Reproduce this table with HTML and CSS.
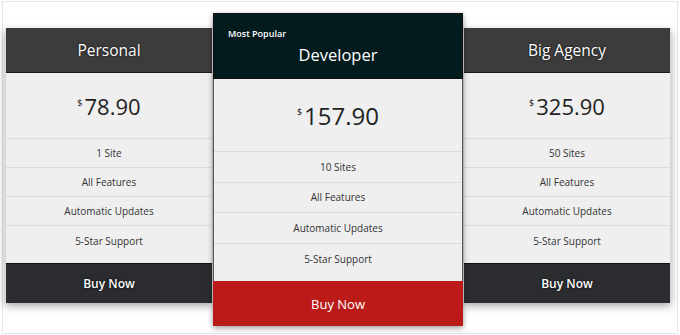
FILE: index.html
```html
<!DOCTYPE html>
<html>
<head>
<meta charset="utf-8">
<link rel="stylesheet" href="styles.css">
</head>
<body>
<div class="frame">
  <div class="plans">
    <div class="plan side">
      <div class="head"><span class="title">Personal</span></div>
      <div class="price"><span class="cur">$</span>78.90</div>
      <ul class="features">
        <li>1 Site</li>
        <li>All Features</li>
        <li>Automatic Updates</li>
        <li>5-Star Support</li>
      </ul>
      <div class="buy">Buy Now</div>
    </div>
    <div class="plan featured">
      <div class="head"><span class="badge">Most Popular</span><span class="title">Developer</span></div>
      <div class="price"><span class="cur">$</span>157.90</div>
      <ul class="features">
        <li>10 Sites</li>
        <li>All Features</li>
        <li>Automatic Updates</li>
        <li>5-Star Support</li>
      </ul>
      <div class="buy">Buy Now</div>
    </div>
    <div class="plan side">
      <div class="head"><span class="title">Big Agency</span></div>
      <div class="price"><span class="cur">$</span>325.90</div>
      <ul class="features">
        <li>50 Sites</li>
        <li>All Features</li>
        <li>Automatic Updates</li>
        <li>5-Star Support</li>
      </ul>
      <div class="buy">Buy Now</div>
    </div>
  </div>
</div>
</body>
</html>
```
FILE: styles.css
```css
* { box-sizing: border-box; }
html, body { margin: 0; padding: 0; background: #fff; }
body {
  font-family: "Open Sans", "Liberation Sans", sans-serif;
  color: #333;
  width: 680px;
  height: 335px;
  overflow: hidden;
}
.frame {
  margin: 1px 0 0 2px;
  width: 676px;
  height: 333px;
  border: 1px solid #e6e6e6;
  padding: 11px 0 0 2px;
}
.plans {
  display: flex;
  align-items: flex-start;
}
.plan {
  display: flex;
  flex-direction: column;
  background: #efefef;
}
.side {
  width: 208px;
  margin-top: 15px;
  box-shadow: 0 3px 8px rgba(0,0,0,0.35);
  border-left: 1px solid #d8d8d8;
  border-right: 1px solid #d8d8d8;
}
.featured {
  width: 250px;
  position: relative;
  z-index: 2;
  border: 1px solid #555;
  box-shadow: 0 2px 6px rgba(0,0,0,0.4);
}
.head {
  display: flex;
  flex-direction: column;
  align-items: center;
  justify-content: center;
  color: #fff;
  background: #3c3c3c;
  border-bottom: 1px solid #1c1c1c;
}
.side .head { height: 45px; }
.side .title { font-size: 15.5px; text-shadow: 0 0 2px #000; }
.featured .head {
  background: #041b1d;
  height: 66px;
  align-items: stretch;
  padding: 13px 0 0 14px;
  justify-content: flex-start;
  margin: -1px -1px 0 -1px;
  border: 1px solid #111;
}
.badge {
  font-size: 9px;
  font-weight: 600;
  line-height: 13px;
}
.featured .title {
  font-size: 16.5px;
  text-align: center;
  padding-right: 14px;
  line-height: 22px;
  margin-top: 4px;
}
.price {
  display: flex;
  align-items: center;
  justify-content: center;
  font-size: 22px;
  color: #222;
  border-bottom: 1px solid #dcdcdc;
}
.side .price { height: 66px; }
.featured .price { height: 73px; font-size: 24px; }
.cur {
  font-size: 9px;
  margin-top: -7px;
  margin-right: 2px;
}
.features {
  list-style: none;
  margin: 0;
  padding: 0 0 8px;
}
.features li {
  font-size: 10px;
  text-align: center;
  color: #333;
  display: flex;
  align-items: center;
  justify-content: center;
}
.side .features li { height: 29px; border-bottom: 1px solid #dcdcdc; }
.featured .features li { height: 30.5px; border-bottom: 1px solid #dcdcdc; }
.features li:last-child { border-bottom: none; }
.featured .features { padding-bottom: 7px; }
.buy {
  display: flex;
  align-items: center;
  justify-content: center;
  color: #fff;
}
.side .buy {
  height: 40px;
  background: #2a2c30;
  border-top: 1px solid #111;
  font-size: 12px;
  font-weight: 600;
  text-shadow: 0 0 2px #000;
}
.featured .buy {
  height: 45px;
  background: #bb1b18;
  font-size: 13px;
  margin: 0 -1px -1px;
}
```
